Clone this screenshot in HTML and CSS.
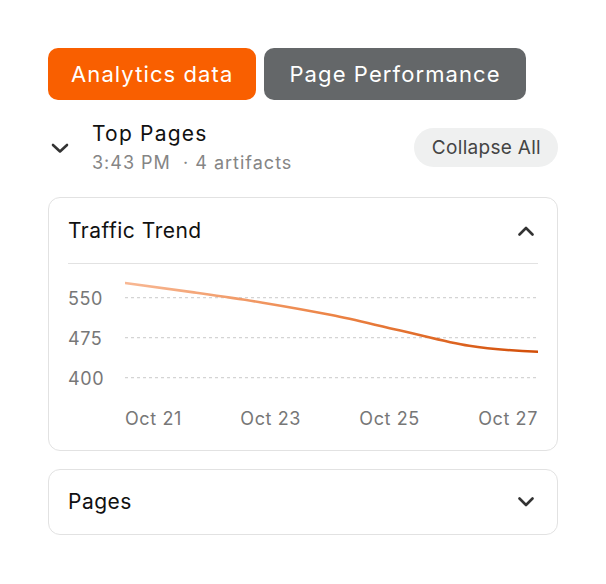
FILE: index.html
```html
<!DOCTYPE html>
<html lang="en">
<head>
<meta charset="utf-8">
<title>Top Pages</title>
<link rel="stylesheet" href="styles.css">
</head>
<body>
<main class="panel">
  <nav class="tabs">
    <button class="tab tab-active">Analytics data</button>
    <button class="tab tab-muted">Page Performance</button>
  </nav>

  <header class="group-head">
    <span class="chev-lg">
      <svg width="24" height="24" viewBox="0 0 24 24"><path d="M5 9l7 6.5L19 9" fill="none" stroke="#333" stroke-width="2.6" stroke-linecap="round" stroke-linejoin="round"/></svg>
    </span>
    <div class="group-titles">
      <div class="group-title">Top Pages</div>
      <div class="group-meta">3:43 PM <span class="dot">&nbsp;·</span> 4 artifacts</div>
    </div>
    <button class="pill">Collapse All</button>
  </header>

  <section class="card">
    <div class="card-head">
      <span class="card-title">Traffic Trend</span>
      <svg class="chev" width="16" height="10" viewBox="0 0 16 10"><path d="M1.5 8.5L8 2l6.5 6.5" fill="none" stroke="#333" stroke-width="2.6" stroke-linecap="round" stroke-linejoin="round"/></svg>
    </div>
    <div class="card-body">
      <div class="chart">
        <div class="y-axis">
          <span>550</span>
          <span>475</span>
          <span>400</span>
        </div>
        <svg class="plot" width="413" height="130" viewBox="0 0 413 130">
          <defs>
            <linearGradient id="lineGrad" gradientUnits="userSpaceOnUse" x1="0" y1="0" x2="413" y2="0">
              <stop offset="0" stop-color="#f8b894"/>
              <stop offset="0.5" stop-color="#ec8446"/>
              <stop offset="1" stop-color="#d24e08"/>
            </linearGradient>
          </defs>
          <g stroke="#d4d4d4" stroke-width="1.2" stroke-dasharray="3 3">
            <line x1="0" y1="33.7" x2="413" y2="33.7"/>
            <line x1="0" y1="73.7" x2="413" y2="73.7"/>
            <line x1="0" y1="113.7" x2="413" y2="113.7"/>
          </g>
          <path d="M0 19 C22.93 22.06 45.87 25.12 68.8 28.4 C91.73 31.68 114.77 34.92 137.7 38.7 C160.63 42.48 183.57 46.47 206.5 51.1 C229.43 55.73 252.37 61.43 275.3 66.5 C298.23 71.57 321.27 78.09 344.2 81.8 C367.13 85.51 390.07 86.76 413 87.8" fill="none" stroke="url(#lineGrad)" stroke-width="2.6" stroke-linecap="round"/>
        </svg>
      </div>
      <div class="x-axis">
        <span>Oct 21</span>
        <span>Oct 23</span>
        <span>Oct 25</span>
        <span>Oct 27</span>
      </div>
    </div>
  </section>

  <section class="card">
    <div class="card-head card-head-closed">
      <span class="card-title">Pages</span>
      <svg class="chev" width="16" height="10" viewBox="0 0 16 10"><path d="M1.5 1.5L8 8l6.5-6.5" fill="none" stroke="#333" stroke-width="2.6" stroke-linecap="round" stroke-linejoin="round"/></svg>
    </div>
  </section>
</main>
</body>
</html>
```

FILE: styles.css
```css
* { box-sizing: border-box; }

html, body {
  margin: 0;
  padding: 0;
  background: #ffffff;
}

body {
  font-family: Inter, "Noto Sans", "DejaVu Sans", sans-serif;
  color: #111111;
}

.panel {
  width: 510px;
  margin-left: 48px;
  padding-top: 48px;
  display: flex;
  flex-direction: column;
}

.tabs {
  display: flex;
  gap: 8px;
}

.tab {
  font-family: inherit;
  font-size: 22px;
  line-height: 26px;
  letter-spacing: 1.1px;
  height: 52px;
  padding: 0 24px;
  border: 0;
  border-radius: 10px;
  color: #ffffff;
  cursor: pointer;
}

.tab-active { background: #f95f00; padding: 0 23px; }
.tab-muted { background: #646769; padding: 0 25px; }

.group-head {
  display: flex;
  align-items: center;
  margin-top: 20px;
}

.chev-lg {
  width: 24px;
  height: 24px;
  display: flex;
}

.group-titles {
  margin-left: 20px;
  flex: 1;
}

.group-title {
  font-size: 21px;
  line-height: 28px;
  letter-spacing: 1.2px;
  color: #111;
}

.group-meta {
  margin-top: 3px;
  font-size: 18px;
  line-height: 24px;
  letter-spacing: 1px;
  color: #858585;
}

.dot { color: #858585; }

.pill {
  font-family: inherit;
  font-size: 19px;
  line-height: 24px;
  letter-spacing: 0.3px;
  height: 39px;
  padding: 0 17px 0 18px;
  border: 0;
  border-radius: 20px;
  background: #eff0f0;
  color: #444444;
}

.card {
  border: 1.5px solid #e2e2e2;
  border-radius: 12px;
  background: #fff;
}

.group-head + .card { margin-top: 22px; }
.card + .card { margin-top: 18px; }

.card-head {
  display: flex;
  align-items: center;
  justify-content: space-between;
  margin: 0 19px 0 19px;
  padding: 20px 0 19px;
  border-bottom: 1.5px solid #e2e2e2;
}

.card-head-closed {
  border-bottom: 0;
  padding: 19px 0;
}

.card-title {
  font-size: 21px;
  line-height: 26px;
  letter-spacing: 0.5px;
  color: #111;
}

.chev { margin-right: 4px; }

.card-body {
  padding: 0 19px 20px;
}

.chart {
  display: flex;
}

.y-axis {
  width: 57px;
  padding-top: 15px;
  display: flex;
  flex-direction: column;
  font-size: 18px;
  line-height: 40px;
  letter-spacing: 0.6px;
  color: #777777;
}

.plot { display: block; }

.x-axis {
  margin-top: 9px;
  padding-left: 57px;
  display: flex;
  justify-content: space-between;
  font-size: 18px;
  line-height: 22px;
  letter-spacing: 0.6px;
  color: #777777;
}
```
